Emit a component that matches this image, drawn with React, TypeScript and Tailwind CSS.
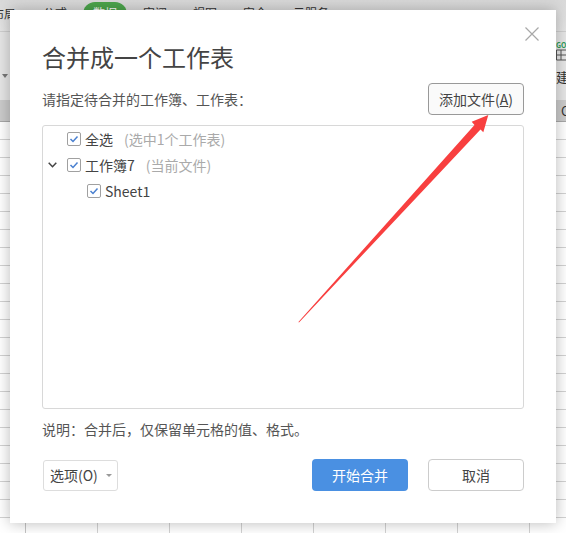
const tabs = [
  { label: "公式", w: "w-[24px]", ml: "ml-[27px]" },
  { label: "审阅", w: "w-[24px]", ml: "ml-[16px]" },
  { label: "视图", w: "w-[24px]", ml: "ml-[26px]" },
  { label: "安全", w: "w-[24px]", ml: "ml-[26px]" },
  { label: "云服务", w: "w-[36px]", ml: "ml-[26px]" },
]

const rows = Array.from({ length: 23 })
const cols = Array.from({ length: 8 })

function Check() {
  return (
    <span className="flex h-[14px] w-[14px] shrink-0 items-center justify-center rounded-[2px] border border-[#a0a0a0] bg-white">
      <svg width="10" height="10" viewBox="0 0 10 10" fill="none">
        <path d="M1.5 5 L4 7.5 L8.5 2.5" stroke="#4a80d0" strokeWidth="1.5" />
      </svg>
    </span>
  )
}

function Spreadsheet() {
  return (
    <div className="flex h-[533px] w-[566px] flex-col overflow-hidden bg-white">
      {/* ribbon tabs, mostly hidden behind the dialog */}
      <div className="flex h-[32px] shrink-0 items-start border-b border-[#cfcfcf] bg-gradient-to-b from-[#d9d9d9] to-[#e6e6e6] pt-[2px] text-[12px] leading-[18px] text-[#333]">
        <span className="-ml-[8px] w-[24px] whitespace-nowrap pt-[3px]">布局</span>
        <span className={`${tabs[0].ml} ${tabs[0].w} whitespace-nowrap pt-[2px]`}>{tabs[0].label}</span>
        <span className="ml-[16px] flex h-[24px] w-[44px] items-start justify-center rounded-full bg-[#4ca64c] pt-[2px] text-white">
          数据
        </span>
        {tabs.slice(1).map((t) => (
          <span key={t.label} className={`${t.ml} ${t.w} whitespace-nowrap pt-[2px]`}>
            {t.label}
          </span>
        ))}
      </div>

      {/* toolbar */}
      <div className="flex h-[68px] shrink-0 items-center justify-between bg-[#e6e6e6]">
        <svg className="ml-[2px] mt-[20px]" width="6" height="4" viewBox="0 0 6 4">
          <path d="M0 0 H6 L3 4 Z" fill="#777" />
        </svg>
        <div className="flex w-[10px] flex-col items-start self-start overflow-hidden pt-[10px]">
          <span className="h-[6px] text-[7px] font-bold leading-[6px] text-[#2f9e5b]">GO</span>
          <svg className="mt-[1px] shrink-0" width="14" height="14" viewBox="0 0 14 14" fill="none">
            <path d="M0.5 1 H13 M0.5 6 H13 M0.5 11 H13 M0.5 1 V11 M5 1 V11" stroke="#555" />
          </svg>
          <span className="mt-[5px] text-[13px] leading-[18px] whitespace-nowrap text-[#333]">建立</span>
        </div>
      </div>

      {/* column header */}
      <div className="flex h-[22px] shrink-0 items-center justify-end border-b border-[#a8a8a8] bg-[#cbcbcb] text-[13px] text-[#333]">
        <span className="w-[5px] overflow-hidden">C</span>
      </div>

      {rows.map((_, r) => (
        <div key={r} className="flex h-[18px] shrink-0 border-b border-[#d2d2d2]">
          <div className="w-[26px] shrink-0 border-r border-[#c4c4c4]" />
          {cols.map((_, c) => (
            <div key={c} className="w-[72px] shrink-0 border-r border-[#d2d2d2]" />
          ))}
        </div>
      ))}
    </div>
  )
}

function MergeDialog() {
  return (
    <div className="absolute left-[10px] top-[10px] flex h-[513px] w-[546px] flex-col bg-white pl-[32px] pr-[32px] shadow-[0_0_14px_rgba(0,0,0,0.28)]">
      <button className="absolute right-[17px] top-[17px]">
        <svg width="14" height="14" viewBox="0 0 14 14" fill="none">
          <path d="M0.5 0.5 L13.5 13.5 M13.5 0.5 L0.5 13.5" stroke="#a8a8a8" strokeWidth="1.2" />
        </svg>
      </button>

      <h1 className="mt-[29px] h-[36px] text-[24px] leading-[36px] font-normal text-[#444]">
        合并成一个工作表
      </h1>

      <div className="mt-[8px] flex h-[32px] items-center justify-between">
        <span className="mt-[1px] text-[14px] text-[#555]">请指定待合并的工作簿、工作表：</span>
        <button className="h-[32px] w-[96px] rounded-[4px] border border-[#999] bg-[#fafafa] text-[14px] whitespace-nowrap text-[#444]">
          添加文件(<span className="underline">A</span>)
        </button>
      </div>

      <div className="mt-[10px] h-[284px] rounded-[3px] border border-[#d8d8d8] text-[14px] text-[#444]">
        <div className="flex h-[26px] items-center pl-[24px]">
          <Check />
          <span className="ml-[4px]">全选</span>
          <span className="ml-[11px] text-[#aaa]">(选中1个工作表)</span>
        </div>
        <div className="flex h-[26px] items-center pl-[5px]">
          <svg className="mr-[10px]" width="9" height="6" viewBox="0 0 9 6" fill="none">
            <path d="M0.7 0.7 L4.5 4.7 L8.3 0.7" stroke="#444" strokeWidth="1.5" />
          </svg>
          <Check />
          <span className="ml-[4px]">工作簿7</span>
          <span className="ml-[11px] text-[#aaa]">(当前文件)</span>
        </div>
        <div className="flex h-[26px] items-center pl-[44px]">
          <Check />
          <span className="ml-[4px]">Sheet1</span>
        </div>
      </div>

      <p className="mt-[10px] h-[20px] text-[14px] leading-[20px] text-[#555]">
        说明：合并后，仅保留单元格的值、格式。
      </p>

      <div className="mt-[20px] flex items-center">
        <button className="ml-[1px] flex h-[31px] w-[75px] items-center rounded-[3px] border border-[#ddd] bg-white pl-[6px] text-[14px] text-[#444]">
          选项(O)
          <svg className="ml-[8px]" width="6" height="3" viewBox="0 0 6 3">
            <path d="M0 0 H6 L3 3 Z" fill="#999" />
          </svg>
        </button>
        <button className="ml-auto h-[32px] w-[96px] rounded-[4px] bg-[#4a90e2] text-[14px] text-white">
          开始合并
        </button>
        <button className="ml-[20px] h-[32px] w-[96px] rounded-[4px] border border-[#ccc] bg-white text-[14px] text-[#444]">
          取消
        </button>
      </div>
    </div>
  )
}

export default function App() {
  return (
    <div className="relative h-[533px] w-[566px] overflow-hidden font-['Noto_Sans_CJK_SC','Noto_Sans',sans-serif]">
      <Spreadsheet />
      <MergeDialog />
      {/* red annotation arrow drawn over the dialog */}
      <svg className="absolute left-0 top-0" width="566" height="533" viewBox="0 0 566 533">
        <polygon points="298.4,322 474.5,125 471.7,121.7 488.3,115 483.3,132.3 480.5,129.5 299,322.4" fill="#f83f3f" />
      </svg>
    </div>
  )
}
